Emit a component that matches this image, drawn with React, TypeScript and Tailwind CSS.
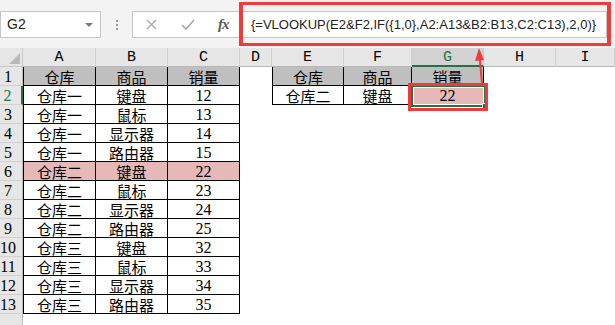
import React from "react";

const cjk = "font-['Noto_Sans_CJK_SC',sans-serif] text-[15px]";
const num = "font-['Liberation_Serif','Noto_Sans_CJK_SC',serif] text-[16px]";

const cols = ["A", "B", "C", "D", "E", "F", "G", "H", "I"];

const left = [
  ["仓库", "商品", "销量"],
  ["仓库一", "键盘", "12"],
  ["仓库一", "鼠标", "13"],
  ["仓库一", "显示器", "14"],
  ["仓库一", "路由器", "15"],
  ["仓库二", "键盘", "22"],
  ["仓库二", "鼠标", "23"],
  ["仓库二", "显示器", "24"],
  ["仓库二", "路由器", "25"],
  ["仓库三", "键盘", "32"],
  ["仓库三", "鼠标", "33"],
  ["仓库三", "显示器", "34"],
  ["仓库三", "路由器", "35"],
];

const right = [
  ["仓库", "商品", "销量"],
  ["仓库二", "键盘", "22"],
];

function Cell({ text, className = "" }: { text?: string; className?: string }) {
  const isNum = text !== undefined && /^\d+$/.test(text);
  return (
    <div
      className={`h-[19px] flex items-center justify-center leading-[15px] text-black whitespace-nowrap ${
        isNum ? num : cjk
      } ${className}`}
    >
      {text}
    </div>
  );
}

export default function App() {
  const rowNums = Array.from({ length: 14 }, (_, i) => i + 1);

  return (
    <div className="relative w-[615px] h-[325px] overflow-hidden bg-white">
      {/* formula bar */}
      <div className="h-[48px] bg-[#f3f3f3] flex items-start pt-[11px] pr-[8px]">
        <div className="w-[101px] h-[27px] bg-white border border-[#c6c6c6] flex items-center pl-[6px] pr-[7px]">
          <span className="flex-1 text-[14px] text-[#222] font-['Liberation_Sans',sans-serif]">G2</span>
          <span className="w-0 h-0 border-x-[4px] border-x-transparent border-t-[4px] border-t-[#7a7a7a]" />
        </div>
        <div className="w-[31px] h-[27px] flex flex-col items-center justify-center gap-[2px]">
          <span className="w-[2px] h-[2px] bg-[#9a9a9a]" />
          <span className="w-[2px] h-[2px] bg-[#9a9a9a]" />
          <span className="w-[2px] h-[2px] bg-[#9a9a9a]" />
        </div>
        <div className="flex-1 h-[27px] bg-white border border-[#c6c6c6] flex items-center">
          <svg width="38" height="25" viewBox="0 0 38 25" className="shrink-0">
            <path d="M14 8 L23 17 M23 8 L14 17" stroke="#a8a8a8" strokeWidth="1.3" fill="none" />
          </svg>
          <svg width="34" height="25" viewBox="0 0 34 25" className="shrink-0">
            <path d="M11 13 L15 17 L23 8" stroke="#a8a8a8" strokeWidth="1.6" fill="none" />
          </svg>
          <span className="w-[44px] shrink-0 pl-[13px] text-[15px] italic font-bold text-[#5a5a5a] font-['Liberation_Serif',serif] tracking-[-1px]">
            fx
          </span>
          <span className="ml-[2px] text-[13px] text-[#222] font-['Liberation_Sans',sans-serif] whitespace-nowrap">
            {"{=VLOOKUP(E2&F2,IF({1,0},A2:A13&B2:B13,C2:C13),2,0)}"}
          </span>
        </div>
      </div>

      {/* sheet */}
      <div className="grid grid-cols-[23px_73px_72px_72px_32px_72px_68px_72px_72px_1fr] auto-rows-[19px]">
        {/* column header row */}
        <div className="relative bg-[#e6e6e6] border-r border-b border-[#c8c8c8]">
          <svg width="23" height="19" viewBox="0 0 23 19" className="absolute left-0 top-0">
            <polygon points="9,16 20,16 20,5" fill="#b9b9b9" />
          </svg>
        </div>
        {cols.map((c) => (
          <div
            key={c}
            className={`h-[19px] leading-[19px] text-center text-[15px] font-['Liberation_Mono',monospace] border-r ${
              c === "G"
                ? "bg-[#d2d2d2] text-[#217346] border-b-2 border-b-[#217346] border-r-[#c8c8c8]"
                : "bg-[#e6e6e6] text-black border-b border-[#b8b8b8] border-r-[#d0d0d0]"
            }`}
          >
            {c}
          </div>
        ))}

        {rowNums.map((r) => {
          const L = left[r - 1];
          const R = right[r - 1];
          const fillL = r === 1 ? "bg-[#bfbfbf]" : r === 6 ? "bg-[#e6b8b7]" : "bg-white";
          return (
            <React.Fragment key={r}>
              <div
                className={`h-[19px] leading-[19px] pr-[6px] text-center ${num} bg-[#e6e6e6] border-b border-b-[#d0d0d0] ${
                  r === 2
                    ? "text-[#217346] border-r-2 border-r-[#217346]"
                    : "text-black border-r border-r-[#bdbdbd]"
                }`}
              >
                {r < 14 ? r : ""}
              </div>
              {L ? (
                <>
                  <Cell text={L[0]} className={`${fillL} border-l border-r border-b border-black`} />
                  <Cell text={L[1]} className={`${fillL} border-r border-b border-black`} />
                  <Cell text={L[2]} className={`${fillL} border-r border-b border-black`} />
                </>
              ) : (
                <>
                  <Cell />
                  <Cell />
                  <Cell />
                </>
              )}
              <Cell />
              {R ? (
                <>
                  <Cell
                    text={R[0]}
                    className={`${r === 1 ? "bg-[#bfbfbf]" : "bg-white"} border-l border-r border-b border-black`}
                  />
                  <Cell
                    text={R[1]}
                    className={`${r === 1 ? "bg-[#bfbfbf]" : "bg-white"} border-r border-b border-black`}
                  />
                  <Cell
                    text={R[2]}
                    className={`${r === 1 ? "bg-[#bfbfbf]" : "bg-[#e6b8b7]"} border-r border-b border-black`}
                  />
                </>
              ) : (
                <>
                  <Cell />
                  <Cell />
                  <Cell />
                </>
              )}
              <Cell />
              <Cell />
            </React.Fragment>
          );
        })}
      </div>

      {/* active cell G2 */}
      <div className="absolute left-[411px] top-[85px] w-[75px] h-[22px] border-2 border-[#217346]">
        <div className="w-full h-full border border-white" />
        <div className="absolute right-[-4px] bottom-[-4px] w-[6px] h-[6px] bg-[#217346] border border-white" />
      </div>

      {/* red highlights */}
      <div className="absolute left-[239px] top-[2px] w-[372px] h-[44px] border-x-4 border-y-[3px] border-[#f23a3a]" />
      <div className="absolute left-[408px] top-[83px] w-[80px] h-[28px] border-[3px] border-[#f23a3a]" />
      <svg width="20" height="44" viewBox="0 0 20 44" className="absolute left-[470px] top-[44px]">
        <line x1="12" y1="40" x2="9.5" y2="12" stroke="#f23a3a" strokeWidth="2" />
        <polygon points="9,4 5,17 14,16" fill="#f23a3a" />
      </svg>
    </div>
  );
}
